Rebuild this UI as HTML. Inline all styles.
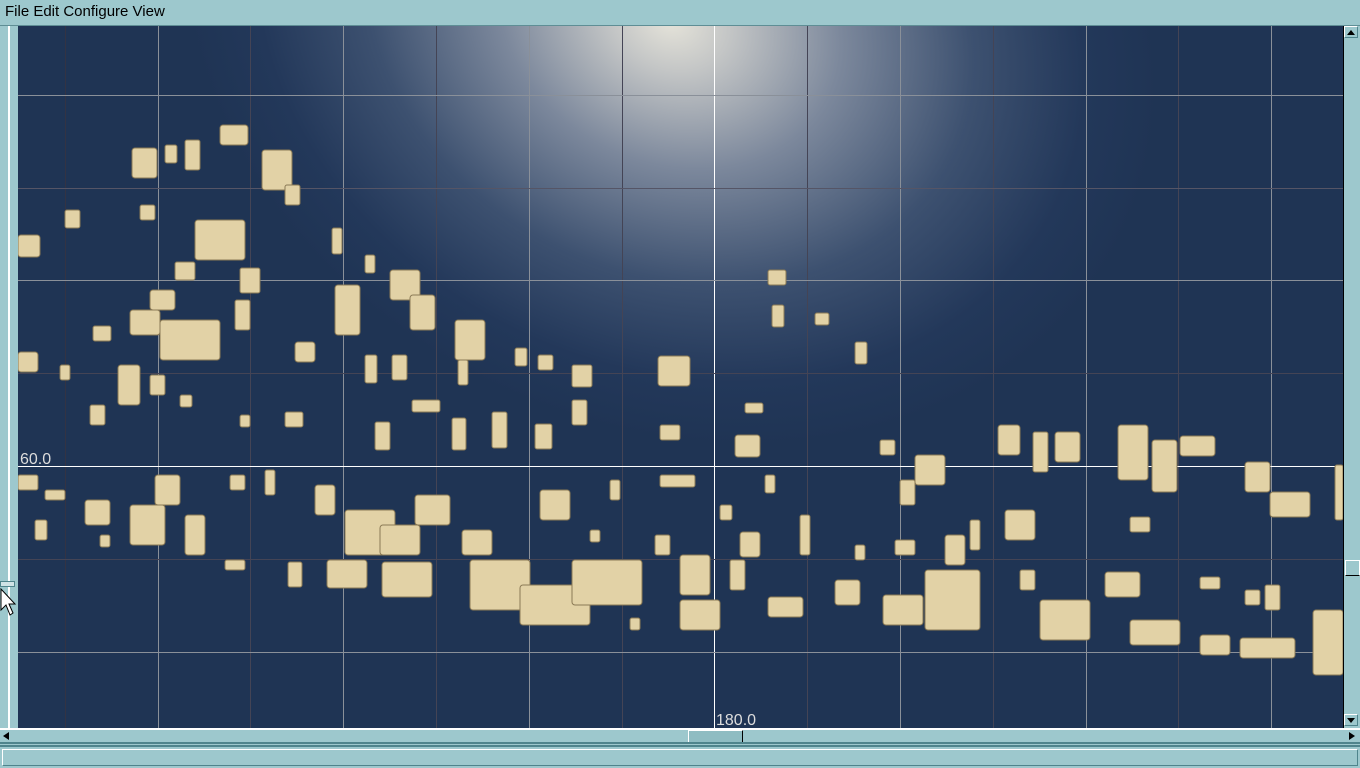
<!DOCTYPE html>
<html><head><meta charset="utf-8"><style>
html,body{margin:0;padding:0;width:1360px;height:768px;overflow:hidden;background:#9dc8cd;font-family:"Liberation Sans",sans-serif}
#menu{position:absolute;left:0;top:0;width:1360px;height:25px;background:#9dc8cd;border-bottom:1px solid #5f8e95;font-size:15px;line-height:24px;color:#000}
#menu span{margin-left:5px}
#left{position:absolute;left:0;top:26px;width:18px;height:702px;background:#9dc8cd}
#left .ln{position:absolute;left:8px;top:0;width:2px;height:702px;background:#fff}
#map{position:absolute;left:18px;top:26px;width:1325px;height:702px}
#vs{position:absolute;left:1343px;top:26px;width:17px;height:718px;background:#9dc8cd;border-left:1px solid #000}
#hs{position:absolute;left:0;top:728px;width:1360px;height:16px;background:#9dc8cd;border-top:2px solid #fff;box-sizing:border-box}
#st{position:absolute;left:0;top:745px;width:1360px;height:23px;background:#9dc8cd;border-top:2px solid #4f848c;box-sizing:border-box}
#st div{position:absolute;left:2px;top:2px;right:2px;bottom:2px;border:1px solid #fff;border-right-color:#4f848c;border-bottom-color:#4f848c}
</style></head><body>
<div id="menu"><span>File</span> Edit Configure View</div>
<div id="left"><div class="ln"></div><div style="position:absolute;left:0;top:555px;width:13px;height:4px;background:#cfe3e6;border:1px solid #4f848c"></div>
<svg style="position:absolute;left:0;top:562px" width="18" height="30"><path d="M1 1 L1 22 L6 17 L10 27 L13 25 L9 16 L15 16 Z" fill="#fff" stroke="#000" stroke-width="1"/></svg></div>
<svg id="map" width="1325" height="702" viewBox="18 26 1325 702">
<defs>
<radialGradient id="g" cx="670" cy="20" r="480" gradientUnits="userSpaceOnUse" gradientTransform="translate(670 20) rotate(25) scale(1.05 0.85) translate(-670 -20)">
<stop offset="0" stop-color="#e6e4da"/><stop offset="0.12" stop-color="#c4c6c6"/><stop offset="0.35" stop-color="#7c889c"/><stop offset="0.62" stop-color="#3d5170"/><stop offset="0.85" stop-color="#23385a"/><stop offset="1" stop-color="#1f3454"/></radialGradient>
</defs>
<rect x="18" y="26" width="1325" height="702" fill="#1f3454"/>
<rect x="18" y="26" width="1325" height="702" fill="url(#g)"/>
<g stroke="#8a9099" stroke-width="1">
<line x1="65.5" y1="26" x2="65.5" y2="728" stroke="#334"/>
<line x1="158.5" y1="26" x2="158.5" y2="728"/><line x1="250.5" y1="26" x2="250.5" y2="728" stroke="#445"/>
<line x1="343.5" y1="26" x2="343.5" y2="728"/><line x1="436.5" y1="26" x2="436.5" y2="728" stroke="#445"/>
<line x1="529.5" y1="26" x2="529.5" y2="728"/><line x1="622.5" y1="26" x2="622.5" y2="728" stroke="#445"/>
<line x1="714.5" y1="26" x2="714.5" y2="728" stroke="#fff"/>
<line x1="807.5" y1="26" x2="807.5" y2="728" stroke="#445"/><line x1="900.5" y1="26" x2="900.5" y2="728"/>
<line x1="993.5" y1="26" x2="993.5" y2="728" stroke="#445"/><line x1="1086.5" y1="26" x2="1086.5" y2="728"/>
<line x1="1178.5" y1="26" x2="1178.5" y2="728" stroke="#445"/><line x1="1271.5" y1="26" x2="1271.5" y2="728"/>
<line x1="18" y1="95.5" x2="1343" y2="95.5"/><line x1="18" y1="188.5" x2="1343" y2="188.5" stroke="#556"/>
<line x1="18" y1="280.5" x2="1343" y2="280.5"/><line x1="18" y1="373.5" x2="1343" y2="373.5" stroke="#445"/>
<line x1="18" y1="466.5" x2="1343" y2="466.5" stroke="#fff"/><line x1="18" y1="559.5" x2="1343" y2="559.5" stroke="#445"/>
<line x1="18" y1="652.5" x2="1343" y2="652.5"/>
</g>
<g fill="#e2d2a6" stroke="#8b7a55" stroke-width="1">
<rect x="220" y="125" width="28" height="20" rx="3"/><rect x="132" y="148" width="25" height="30" rx="3"/><rect x="165" y="145" width="12" height="18" rx="2"/><rect x="185" y="140" width="15" height="30" rx="2"/>
<rect x="262" y="150" width="30" height="40" rx="3"/><rect x="285" y="185" width="15" height="20" rx="2"/><rect x="18" y="235" width="22" height="22" rx="3"/><rect x="65" y="210" width="15" height="18" rx="2"/>
<rect x="195" y="220" width="50" height="40" rx="3"/><rect x="175" y="262" width="20" height="18" rx="2"/><rect x="240" y="268" width="20" height="25" rx="2"/><rect x="332" y="228" width="10" height="26" rx="2"/>
<rect x="365" y="255" width="10" height="18" rx="2"/><rect x="390" y="270" width="30" height="30" rx="3"/><rect x="410" y="295" width="25" height="35" rx="3"/><rect x="335" y="285" width="25" height="50" rx="3"/>
<rect x="150" y="290" width="25" height="20" rx="3"/><rect x="130" y="310" width="30" height="25" rx="3"/><rect x="160" y="320" width="60" height="40" rx="3"/><rect x="93" y="326" width="18" height="15" rx="2"/>
<rect x="235" y="300" width="15" height="30" rx="2"/><rect x="18" y="352" width="20" height="20" rx="3"/><rect x="118" y="365" width="22" height="40" rx="3"/><rect x="150" y="375" width="15" height="20" rx="2"/>
<rect x="295" y="342" width="20" height="20" rx="3"/><rect x="365" y="355" width="12" height="28" rx="2"/><rect x="392" y="355" width="15" height="25" rx="2"/><rect x="455" y="320" width="30" height="40" rx="3"/>
<rect x="458" y="360" width="10" height="25" rx="2"/><rect x="515" y="348" width="12" height="18" rx="2"/><rect x="538" y="355" width="15" height="15" rx="2"/><rect x="572" y="365" width="20" height="22" rx="2"/>
<rect x="658" y="356" width="32" height="30" rx="3"/><rect x="768" y="270" width="18" height="15" rx="2"/><rect x="772" y="305" width="12" height="22" rx="2"/><rect x="815" y="313" width="14" height="12" rx="2"/>
<rect x="855" y="342" width="12" height="22" rx="2"/><rect x="90" y="405" width="15" height="20" rx="2"/><rect x="285" y="412" width="18" height="15" rx="2"/><rect x="375" y="422" width="15" height="28" rx="2"/>
<rect x="412" y="400" width="28" height="12" rx="2"/><rect x="452" y="418" width="14" height="32" rx="2"/><rect x="492" y="412" width="15" height="36" rx="2"/><rect x="535" y="424" width="17" height="25" rx="2"/>
<rect x="572" y="400" width="15" height="25" rx="2"/><rect x="660" y="425" width="20" height="15" rx="2"/><rect x="735" y="435" width="25" height="22" rx="3"/><rect x="745" y="403" width="18" height="10" rx="2"/>
<rect x="880" y="440" width="15" height="15" rx="2"/><rect x="915" y="455" width="30" height="30" rx="3"/><rect x="998" y="425" width="22" height="30" rx="3"/><rect x="1033" y="432" width="15" height="40" rx="2"/>
<rect x="1055" y="432" width="25" height="30" rx="3"/><rect x="1118" y="425" width="30" height="55" rx="3"/><rect x="1152" y="440" width="25" height="52" rx="3"/><rect x="1180" y="436" width="35" height="20" rx="3"/>
<rect x="1245" y="462" width="25" height="30" rx="3"/><rect x="1270" y="492" width="40" height="25" rx="3"/><rect x="1335" y="465" width="8" height="55" rx="2"/>
<rect x="85" y="500" width="25" height="25" rx="3"/><rect x="130" y="505" width="35" height="40" rx="3"/><rect x="155" y="475" width="25" height="30" rx="3"/><rect x="185" y="515" width="20" height="40" rx="3"/>
<rect x="345" y="510" width="50" height="45" rx="3"/><rect x="380" y="525" width="40" height="30" rx="3"/><rect x="415" y="495" width="35" height="30" rx="3"/><rect x="315" y="485" width="20" height="30" rx="3"/>
<rect x="225" y="560" width="20" height="10" rx="2"/><rect x="288" y="562" width="14" height="25" rx="2"/><rect x="327" y="560" width="40" height="28" rx="3"/><rect x="382" y="562" width="50" height="35" rx="3"/>
<rect x="462" y="530" width="30" height="25" rx="3"/><rect x="470" y="560" width="60" height="50" rx="3"/><rect x="520" y="585" width="70" height="40" rx="3"/><rect x="572" y="560" width="70" height="45" rx="3"/>
<rect x="540" y="490" width="30" height="30" rx="3"/><rect x="655" y="535" width="15" height="20" rx="2"/><rect x="680" y="555" width="30" height="40" rx="3"/><rect x="680" y="600" width="40" height="30" rx="3"/>
<rect x="730" y="560" width="15" height="30" rx="2"/><rect x="740" y="532" width="20" height="25" rx="3"/><rect x="768" y="597" width="35" height="20" rx="3"/><rect x="800" y="515" width="10" height="40" rx="2"/>
<rect x="835" y="580" width="25" height="25" rx="3"/><rect x="883" y="595" width="40" height="30" rx="3"/><rect x="925" y="570" width="55" height="60" rx="3"/><rect x="945" y="535" width="20" height="30" rx="3"/>
<rect x="1005" y="510" width="30" height="30" rx="3"/><rect x="1020" y="570" width="15" height="20" rx="2"/><rect x="1040" y="600" width="50" height="40" rx="3"/><rect x="1105" y="572" width="35" height="25" rx="3"/>
<rect x="1130" y="620" width="50" height="25" rx="3"/><rect x="1200" y="635" width="30" height="20" rx="3"/><rect x="1240" y="638" width="55" height="20" rx="3"/><rect x="1313" y="610" width="30" height="65" rx="3"/>
<rect x="1200" y="577" width="20" height="12" rx="2"/><rect x="1245" y="590" width="15" height="15" rx="2"/><rect x="1265" y="585" width="15" height="25" rx="2"/><rect x="1130" y="517" width="20" height="15" rx="2"/>
<rect x="18" y="475" width="20" height="15" rx="2"/><rect x="45" y="490" width="20" height="10" rx="2"/><rect x="230" y="475" width="15" height="15" rx="2"/><rect x="265" y="470" width="10" height="25" rx="2"/>
<rect x="855" y="545" width="10" height="15" rx="2"/><rect x="895" y="540" width="20" height="15" rx="2"/><rect x="900" y="480" width="15" height="25" rx="2"/><rect x="970" y="520" width="10" height="30" rx="2"/>
<rect x="660" y="475" width="35" height="12" rx="2"/><rect x="610" y="480" width="10" height="20" rx="2"/><rect x="720" y="505" width="12" height="15" rx="2"/><rect x="765" y="475" width="10" height="18" rx="2"/>
<rect x="60" y="365" width="10" height="15" rx="2"/><rect x="240" y="415" width="10" height="12" rx="2"/><rect x="180" y="395" width="12" height="12" rx="2"/><rect x="140" y="205" width="15" height="15" rx="2"/>
<rect x="100" y="535" width="10" height="12" rx="2"/><rect x="35" y="520" width="12" height="20" rx="2"/><rect x="590" y="530" width="10" height="12" rx="2"/><rect x="630" y="618" width="10" height="12" rx="2"/>
</g>
<text x="20" y="464" fill="#ddd" font-family="Liberation Sans" font-size="16">60.0</text>
<text x="716" y="725" fill="#ddd" font-family="Liberation Sans" font-size="16">180.0</text>
</svg>
<div id="vs">
<div style="position:absolute;left:0;top:0;width:14px;height:12px;border:1px solid #fff;border-right-color:#4f848c;border-bottom-color:#4f848c;box-sizing:border-box"><div style="margin:3px auto 0;width:0;height:0;border-left:4px solid transparent;border-right:4px solid transparent;border-bottom:5px solid #000"></div></div>
<div style="position:absolute;left:1px;top:534px;width:15px;height:16px;background:#9dc8cd;border:1px solid #fff;border-bottom-color:#000;box-sizing:border-box"></div>
<div style="position:absolute;left:0;top:688px;width:14px;height:12px;border:1px solid #fff;border-right-color:#4f848c;border-bottom-color:#4f848c;box-sizing:border-box"><div style="margin:3px auto 0;width:0;height:0;border-left:4px solid transparent;border-right:4px solid transparent;border-top:5px solid #000"></div></div>
</div>
<div id="hs">
<div style="position:absolute;left:3px;top:2px;width:0;height:0;border-top:4px solid transparent;border-bottom:4px solid transparent;border-right:6px solid #000"></div>
<div style="position:absolute;left:688px;top:0;width:55px;height:14px;background:#8fbcc2;border:1px solid #fff;border-right-color:#000;border-bottom-color:#000;box-sizing:border-box"></div>
<div style="position:absolute;left:1349px;top:2px;width:0;height:0;border-top:4px solid transparent;border-bottom:4px solid transparent;border-left:6px solid #000"></div>
<div style="position:absolute;left:0;bottom:0;width:1360px;height:2px;background:#4f848c"></div>
</div>
<div id="st"><div></div></div>
</body></html>
